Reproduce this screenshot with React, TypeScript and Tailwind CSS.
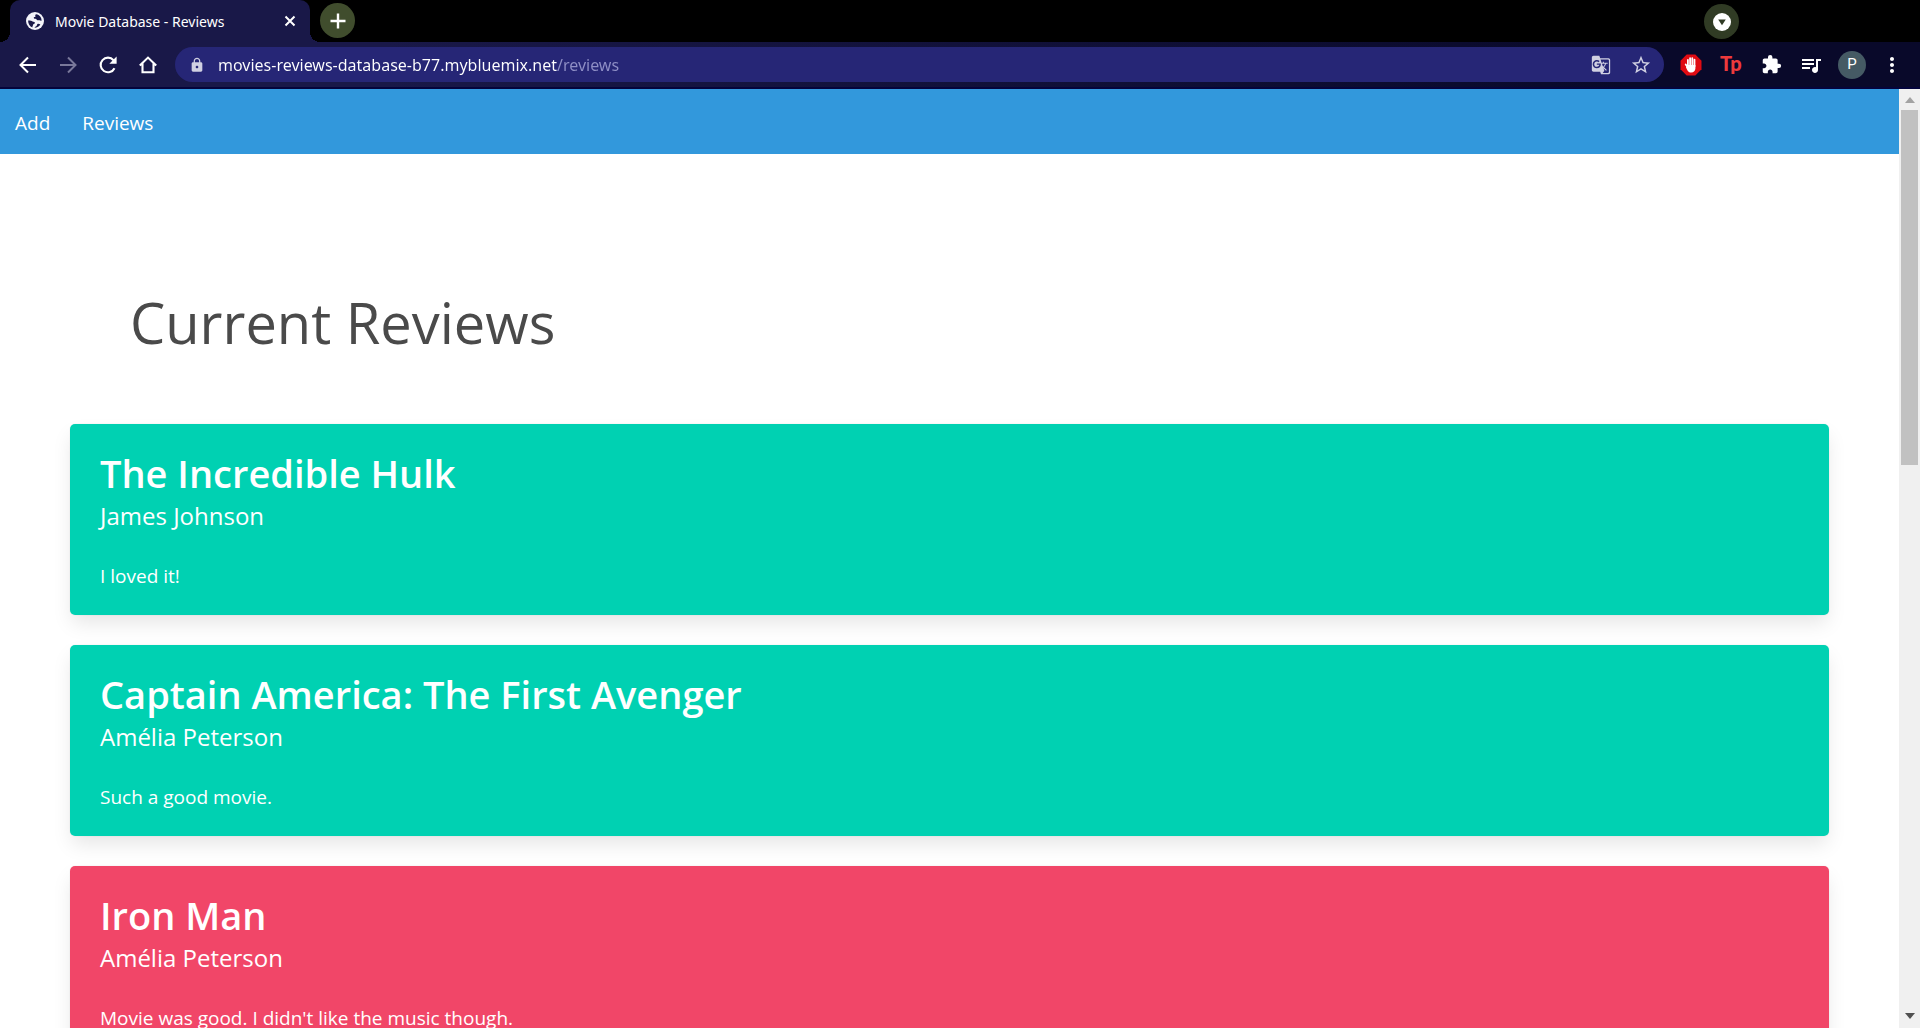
import {
  MdExtension,
  MdGTranslate,
  MdLock,
  MdMoreVert,
  MdOutlineStarBorder,
  MdQueueMusic,
} from "react-icons/md";

type Review = {
  title: string;
  author: string;
  text: string;
  positive: boolean;
};

const reviews: Review[] = [
  { title: "The Incredible Hulk", author: "James Johnson", text: "I loved it!", positive: true },
  { title: "Captain America: The First Avenger", author: "Amélia Peterson", text: "Such a good movie.", positive: true },
  { title: "Iron Man", author: "Amélia Peterson", text: "Movie was good. I didn't like the music though.", positive: false },
];

function GlobeIcon() {
  return (
    <svg viewBox="0 0 18 18" className="size-[18px] shrink-0" aria-hidden="true">
      <circle cx="9" cy="9" r="9" fill="#f4f4fa" />
      <path
        d="M10.2 2.2c-.9.4-1.2 1-.8 1.700.4.6-.2 1.100-1 1.200-.8.1-.8 1.100-.3 1.500.6.4 2 .1 2.500.9.4.7 1.200.9 2.200.8 1.200 0 1.800.5 2.800.5.2-3.300-2-5.900-5.400-6.600z"
        fill="#191848"
      />
      <path
        d="M2.100 8.600c1.300-.2 3.200-.2 4.200.6.8.7 1.800.5 2.400 1.100.6.8-.1 1.500-.9 1.700-.9.3-.6 1.200-1 1.800-.3.5-.5 1-.4 1.700C3.700 14.500 2 12 2.100 8.600z"
        fill="#191848"
      />
      <path d="M8.600 15.800c0-1.300 1.100-1.200 1.900-1.900.8-.8.5-1.900 1.500-2.100.9-.1 1.300.5 2.400.4-1 2.200-3.200 3.600-5.800 3.600z" fill="#191848" />
    </svg>
  );
}

function ArrowIcon({ forward = false }: { forward?: boolean }) {
  return (
    <svg viewBox="0 0 20 20" className="size-5" fill="none" stroke="currentColor" strokeWidth="2" aria-hidden="true">
      {forward ? <path d="M2 10h15M10 2.500l7.500 7.500-7.500 7.500" /> : <path d="M18 10H3M10 2.500L2.500 10l7.500 7.500" />}
    </svg>
  );
}

function ReloadIcon() {
  return (
    <svg viewBox="0 0 20 20" className="size-5" fill="none" aria-hidden="true">
      <path d="M16.500 13.200A7.300 7.300 0 1 1 15.500 5.200" stroke="currentColor" strokeWidth="2.100" />
      <path d="M18.600 1.500v7.300h-7.300z" fill="currentColor" />
    </svg>
  );
}

function HomeIcon() {
  return (
    <svg viewBox="0 0 20 20" className="size-5" fill="none" stroke="currentColor" strokeWidth="2.100" aria-hidden="true">
      <path d="M1.800 10.400L10 2.600l8.200 7.800M4.500 8.500v8.800h11V8.500" />
    </svg>
  );
}

function BlockerIcon() {
  return (
    <svg viewBox="0 0 22 22" className="size-[22px]" aria-hidden="true">
      <path d="M6.700 .5h8.600l6.200 6.200v8.600l-6.200 6.200H6.700L.5 15.300V6.700z" fill="#e00b12" />
      <g stroke="#fff" strokeWidth="1.800" strokeLinecap="round" fill="none">
        <path d="M7.900 6v6M10.100 4.200v8M12.300 4.200v8M14.500 5.600v7M5.700 10.500l2.300 3" />
      </g>
      <path d="M7 11h8.400v3.200c0 2.400-1.700 4.300-4.200 4.300-1.800 0-3-.8-3.800-2.300L6 13.400z" fill="#fff" />
    </svg>
  );
}

function TabStrip() {
  return (
    <div className="flex h-[42px] items-start bg-black pl-2.5">
      <div className="relative flex h-[42px] w-[300px] items-center rounded-t-[10px] bg-[#191848] pr-3.5 pl-4">
        <span className="absolute bottom-0 -left-2.5 size-2.5 bg-[radial-gradient(circle_at_0_0,#000_10px,#191848_10px)]" />
        <span className="absolute -right-2.5 bottom-0 size-2.5 bg-[radial-gradient(circle_at_100%_0,#000_10px,#191848_10px)]" />
        <GlobeIcon />
        <span className="ml-[11px] flex-1 font-['Noto_Sans'] text-[14px] whitespace-nowrap text-white">Movie Database - Reviews</span>
        <button type="button" aria-label="Close tab" className="text-white">
          <svg viewBox="0 0 12 12" className="size-3" stroke="currentColor" strokeWidth="2" aria-hidden="true">
            <path d="M1.500 1.500l9 9M10.500 1.500l-9 9" />
          </svg>
        </button>
      </div>
      <button
        type="button"
        aria-label="New tab"
        className="mt-[3px] ml-2.5 grid size-[35px] place-items-center rounded-full bg-[#404d2d] text-white"
      >
        <svg viewBox="0 0 16 16" className="size-4" stroke="currentColor" strokeWidth="2.400" aria-hidden="true">
          <path d="M8 .5v15M.5 8h15" />
        </svg>
      </button>
      <button
        type="button"
        aria-label="Search tabs"
        className="mt-1 mr-[181px] ml-auto grid size-[35px] place-items-center rounded-full bg-[#303b24]"
      >
        <svg viewBox="0 0 18 18" className="size-[18px]" aria-hidden="true">
          <circle cx="9" cy="9" r="9" fill="#fff" />
          <path d="M5.200 6.500h7.600L9 12.200z" fill="#303b24" />
        </svg>
      </button>
    </div>
  );
}

function Toolbar() {
  return (
    <div className="flex h-[47px] items-center border-b-2 border-[#04043c] bg-linear-to-r from-[#191848] from-20% to-[#09092a] to-85% pr-4 pl-[18px] text-white">
      <div className="flex items-center gap-5">
        <button type="button" aria-label="Back"><ArrowIcon /></button>
        <button type="button" aria-label="Forward" className="text-[#79789a]"><ArrowIcon forward /></button>
        <button type="button" aria-label="Reload"><ReloadIcon /></button>
        <button type="button" aria-label="Home"><HomeIcon /></button>
      </div>
      <div className="ml-[17px] flex h-[35px] flex-1 items-center rounded-full bg-[#262676] pr-3 pl-3.5 text-[#d0d0e2]">
        <MdLock className="size-4 shrink-0" />
        <input
          type="text"
          aria-label="Address"
          defaultValue="movies-reviews-database-b77.mybluemix.net/reviews"
          className="ml-[13px] min-w-0 flex-1 bg-linear-to-r from-white from-[339px] to-[#8f8fc6] to-[339px] bg-clip-text font-['Noto_Sans'] text-[16px] text-transparent outline-none"
        />
        <button type="button" aria-label="Translate this page"><MdGTranslate className="size-5" /></button>
        <button type="button" aria-label="Bookmark this page" className="ml-[19px]"><MdOutlineStarBorder className="size-[22px]" /></button>
      </div>
      <div className="ml-4 flex items-center">
        <button type="button" aria-label="Ad blocker"><BlockerIcon /></button>
        <button type="button" aria-label="Tp extension" className="ml-[18px] w-6 pb-1 text-left font-['Lato'] text-[20px] leading-5 font-black text-[#ee3a3c]">Tp</button>
        <button type="button" aria-label="Extensions" className="ml-[17px]"><MdExtension className="size-[21px]" /></button>
        <button type="button" aria-label="Media controls" className="ml-[17px]"><MdQueueMusic className="size-6" /></button>
        <button type="button" aria-label="Profile" className="ml-[15px] size-7 rounded-full bg-[#455a64] font-['Roboto'] text-[15px]">P</button>
        <button type="button" aria-label="Menu" className="ml-3.5"><MdMoreVert className="size-6" /></button>
      </div>
    </div>
  );
}

function ReviewCard({ review }: { review: Review }) {
  return (
    <article
      className={
        "rounded-[5px] px-[30px] py-6 text-white shadow-[0_10px_20px_-2px_rgba(10,10,10,0.1),0_0_0_1px_rgba(10,10,10,0.02)] " +
        (review.positive ? "bg-[#00d1b2]" : "bg-[#f14668]")
      }
    >
      <h2 className="text-[38px] leading-[50px] font-semibold">{review.title}</h2>
      <p className="text-[24px] leading-[36px]">{review.author}</p>
      <p className="mt-[27px] text-[19px] leading-[30px]">{review.text}</p>
    </article>
  );
}

function Scrollbar() {
  return (
    <div className="flex w-[21px] shrink-0 flex-col items-center bg-[#f0f0f0]" aria-hidden="true">
      <div className="grid h-[21px] place-items-center">
        <svg viewBox="0 0 10 6" className="h-1.5 w-2.5"><path d="M0 6L5 0l5 6z" fill="#a3a3a3" /></svg>
      </div>
      <div className="h-[355px] w-[17px] bg-[#c1c1c1]" />
      <div className="mt-auto grid h-[21px] place-items-center pb-1">
        <svg viewBox="0 0 10 6" className="h-1.5 w-2.5"><path d="M0 0h10L5 6z" fill="#505050" /></svg>
      </div>
    </div>
  );
}

export default function App() {
  return (
    <div className="flex h-screen flex-col overflow-hidden bg-white font-['Open_Sans','Noto_Sans',sans-serif]">
      <header>
        <TabStrip />
        <Toolbar />
      </header>
      <div className="flex min-h-0 flex-1">
        <div className="min-w-0 flex-1 overflow-hidden">
          <nav className="flex h-[65px] items-center gap-8 bg-[#3298dc] px-[15px] pt-1 text-[19px] text-white">
            <a href="#add">Add</a>
            <a href="#reviews">Reviews</a>
          </nav>
          <main className="px-[70px] pt-[118px]">
            <h1 className="px-[60px] py-[15px] text-[56px] leading-[70px] text-[#4a4a4a]">Current Reviews</h1>
            <div className="mt-[52px] flex flex-col gap-[30px]">
              {reviews.map((review) => (
                <ReviewCard key={review.title} review={review} />
              ))}
            </div>
          </main>
        </div>
        <Scrollbar />
      </div>
    </div>
  );
}
